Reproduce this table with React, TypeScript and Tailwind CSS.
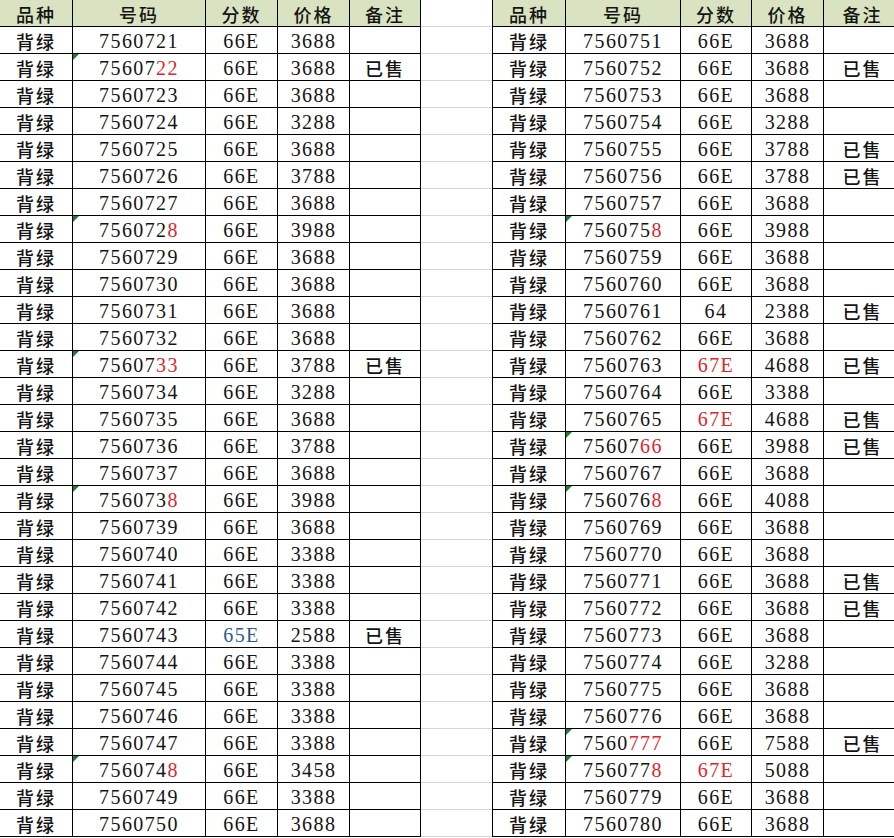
import React from "react";

type Row = {
  num: string;
  red?: number; // number of trailing red digits
  score: string;
  scoreColor?: "red" | "blue";
  price: string;
  note?: string;
};

const L: Row[] = [
  { num: "7560721", score: "66E", price: "3688" },
  { num: "7560722", red: 2, score: "66E", price: "3688", note: "已售" },
  { num: "7560723", score: "66E", price: "3688" },
  { num: "7560724", score: "66E", price: "3288" },
  { num: "7560725", score: "66E", price: "3688" },
  { num: "7560726", score: "66E", price: "3788" },
  { num: "7560727", score: "66E", price: "3688" },
  { num: "7560728", red: 1, score: "66E", price: "3988" },
  { num: "7560729", score: "66E", price: "3688" },
  { num: "7560730", score: "66E", price: "3688" },
  { num: "7560731", score: "66E", price: "3688" },
  { num: "7560732", score: "66E", price: "3688" },
  { num: "7560733", red: 2, score: "66E", price: "3788", note: "已售" },
  { num: "7560734", score: "66E", price: "3288" },
  { num: "7560735", score: "66E", price: "3688" },
  { num: "7560736", score: "66E", price: "3788" },
  { num: "7560737", score: "66E", price: "3688" },
  { num: "7560738", red: 1, score: "66E", price: "3988" },
  { num: "7560739", score: "66E", price: "3688" },
  { num: "7560740", score: "66E", price: "3388" },
  { num: "7560741", score: "66E", price: "3388" },
  { num: "7560742", score: "66E", price: "3388" },
  { num: "7560743", score: "65E", scoreColor: "blue", price: "2588", note: "已售" },
  { num: "7560744", score: "66E", price: "3388" },
  { num: "7560745", score: "66E", price: "3388" },
  { num: "7560746", score: "66E", price: "3388" },
  { num: "7560747", score: "66E", price: "3388" },
  { num: "7560748", red: 1, score: "66E", price: "3458" },
  { num: "7560749", score: "66E", price: "3388" },
  { num: "7560750", score: "66E", price: "3688" },
];

const R: Row[] = [
  { num: "7560751", score: "66E", price: "3688" },
  { num: "7560752", score: "66E", price: "3688", note: "已售" },
  { num: "7560753", score: "66E", price: "3688" },
  { num: "7560754", score: "66E", price: "3288" },
  { num: "7560755", score: "66E", price: "3788", note: "已售" },
  { num: "7560756", score: "66E", price: "3788", note: "已售" },
  { num: "7560757", score: "66E", price: "3688" },
  { num: "7560758", red: 1, score: "66E", price: "3988" },
  { num: "7560759", score: "66E", price: "3688" },
  { num: "7560760", score: "66E", price: "3688" },
  { num: "7560761", score: "64", price: "2388", note: "已售" },
  { num: "7560762", score: "66E", price: "3688" },
  { num: "7560763", score: "67E", scoreColor: "red", price: "4688", note: "已售" },
  { num: "7560764", score: "66E", price: "3388" },
  { num: "7560765", score: "67E", scoreColor: "red", price: "4688", note: "已售" },
  { num: "7560766", red: 2, score: "66E", price: "3988", note: "已售" },
  { num: "7560767", score: "66E", price: "3688" },
  { num: "7560768", red: 1, score: "66E", price: "4088" },
  { num: "7560769", score: "66E", price: "3688" },
  { num: "7560770", score: "66E", price: "3688" },
  { num: "7560771", score: "66E", price: "3688", note: "已售" },
  { num: "7560772", score: "66E", price: "3688", note: "已售" },
  { num: "7560773", score: "66E", price: "3688" },
  { num: "7560774", score: "66E", price: "3288" },
  { num: "7560775", score: "66E", price: "3688" },
  { num: "7560776", score: "66E", price: "3688" },
  { num: "7560777", red: 3, score: "66E", price: "7588", note: "已售" },
  { num: "7560778", red: 1, score: "67E", scoreColor: "red", price: "5088" },
  { num: "7560779", score: "66E", price: "3688" },
  { num: "7560780", score: "66E", price: "3688" },
];

const cell =
  "h-[27px] border-r border-b border-black flex items-center justify-center relative";
const cjk =
  "font-['Noto_Sans_CJK_SC',sans-serif] text-[18px] font-medium tracking-[2px] leading-[20px] pt-[2px]";
const num =
  "font-['Liberation_Serif',serif] text-[20px] tracking-[1.4px] leading-[20px] pt-[2px]";

function Tri() {
  return (
    <span className="absolute left-0 top-0 w-0 h-0 border-t-[6px] border-r-[6px] border-t-[#1f7a3c] border-r-transparent" />
  );
}

function Table({ rows, cols, leftBorder }: { rows: Row[]; cols: string; leftBorder?: boolean }) {
  const heads = ["品种", "号码", "分数", "价格", "备注"];
  return (
    <div className={`grid ${cols} ${leftBorder ? "border-l border-black" : ""} text-[#141414]`}>
      {heads.map((h) => (
        <div key={h} className={`${cell} bg-[#d9e3c1]`}>
          <span className={cjk}>{h}</span>
        </div>
      ))}
      {rows.map((r) => {
        const redN = r.red ?? 0;
        const a = r.num.slice(0, r.num.length - redN);
        const b = r.num.slice(r.num.length - redN);
        return (
          <React.Fragment key={r.num}>
            <div className={cell}>
              <span className={cjk}>背绿</span>
            </div>
            <div className={cell}>
              {redN > 0 && <Tri />}
              <span className={num}>
                {a}
                {b && <span className="text-[#e0262b]">{b}</span>}
              </span>
            </div>
            <div className={cell}>
              <span
                className={`${num} ${
                  r.scoreColor === "red"
                    ? "text-[#e0262b]"
                    : r.scoreColor === "blue"
                    ? "text-[#2f5b86]"
                    : ""
                }`}
              >
                {r.score}
              </span>
            </div>
            <div className={cell}>
              <span className={num}>{r.price}</span>
            </div>
            <div className={cell}>
              {r.note && <span className={cjk}>{r.note}</span>}
            </div>
          </React.Fragment>
        );
      })}
    </div>
  );
}

export default function App() {
  return (
    <div className="w-[894px] h-[838px] overflow-hidden bg-white flex">
      <div className="w-[421px] shrink-0">
        <Table rows={L} cols="grid-cols-[73px_133px_72px_72px_71px]" />
      </div>
      <div className="w-[71px] shrink-0 flex flex-col">
        {Array.from({ length: 31 }).map((_, i) => (
          <div key={i} className="h-[27px] border-b border-[#d6d6d6]" />
        ))}
      </div>
      <div className="w-[410px] shrink-0">
        <Table rows={R} cols="grid-cols-[73px_115px_71px_72px_78px]" leftBorder />
      </div>
    </div>
  );
}
